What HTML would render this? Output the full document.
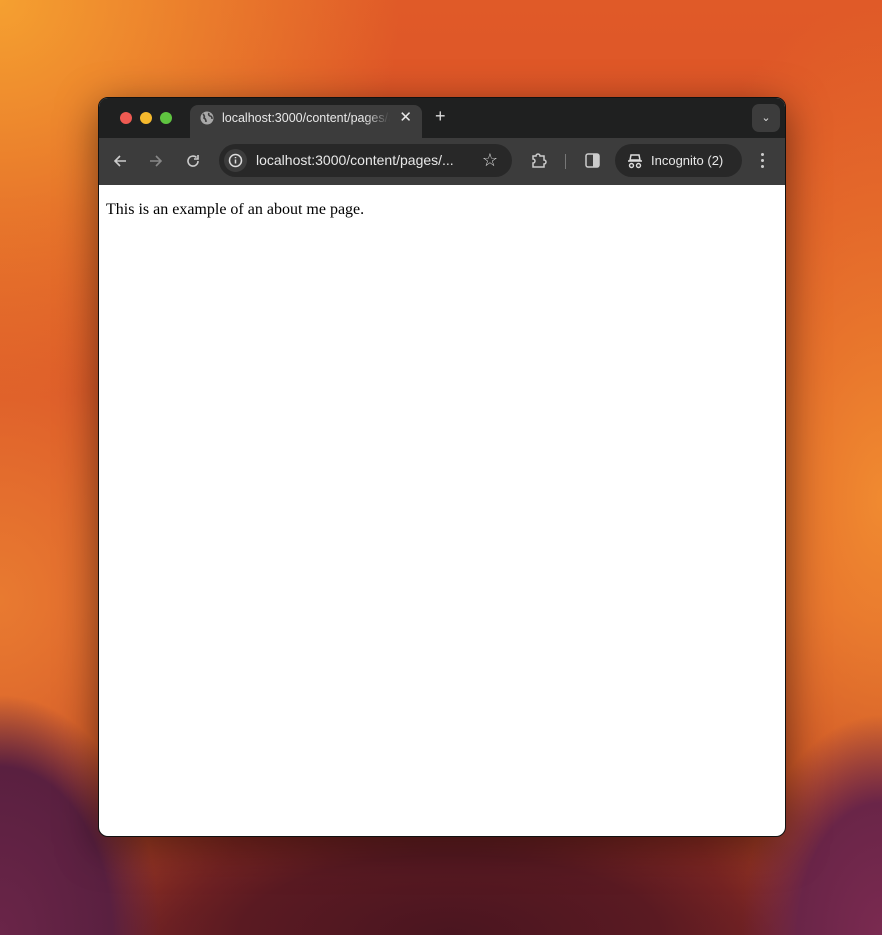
<!DOCTYPE html>
<html><head><style>
*{margin:0;padding:0;box-sizing:border-box}
body{width:882px;height:935px;overflow:hidden;position:relative;font-family:"Liberation Sans",sans-serif;
background:
radial-gradient(ellipse 160px 240px at 0px 935px,#6a2548 0%,#5a2040 70%,rgba(90,30,60,0) 100%),
radial-gradient(ellipse 140px 220px at 882px 935px,#7a2a50 0%,#6a2548 60%,rgba(120,40,80,0) 100%),
radial-gradient(ellipse 420px 160px at 450px 935px,#4a1520 0%,#5a1a22 50%,rgba(70,20,30,0) 100%),
radial-gradient(ellipse 400px 400px at 0px 0px,#f5a030 0%,rgba(240,140,40,0) 100%),
radial-gradient(ellipse 250px 500px at 882px 500px,#f08a30 0%,rgba(240,130,40,0) 100%),
radial-gradient(ellipse 300px 400px at 0px 600px,#e87a30 0%,rgba(232,122,48,0) 100%),
linear-gradient(180deg,#e05a28 0%,#d84a25 40%,#d8502a 65%,#b83a22 85%,#8a2a25 100%);}
.win{position:absolute;left:98px;top:97px;width:688px;height:740px;border-radius:10px;overflow:hidden;background:#fff;box-shadow:0 10px 40px rgba(0,0,0,.5);border:1px solid #111}
.title{height:40px;background:#1f2020;position:relative}
.dot{position:absolute;top:14px;width:12px;height:12px;border-radius:50%}
.tab{position:absolute;left:91px;top:7px;width:232px;height:33px;background:#3c3c3c;border-radius:8px 8px 0 0;color:#e8e8e8;font-size:12.5px;line-height:26px;padding-left:32px}
.tool{height:47px;background:#3c3c3c;position:relative;color:#c8c8c8}
.omni{position:absolute;left:120px;top:6px;width:293px;height:33px;background:#282828;border-radius:17px;color:#e8e8e8;font-size:14px;line-height:33px;padding-left:37px}
.inc{position:absolute;left:516px;top:6px;width:127px;height:33px;background:#282828;border-radius:17px;color:#e8e8e8;font-size:13px;line-height:33px;padding-left:36px}
.ic{position:absolute;font-size:15px}
.content{padding:16px 7px;font-family:"Liberation Serif",serif;font-size:16px;color:#000}
</style></head><body>
<div class="win">
<div class="title">
<div class="dot" style="left:21px;background:#ee5a52"></div>
<div class="dot" style="left:41px;background:#f5b92d"></div>
<div class="dot" style="left:61px;background:#5fc440"></div>
<div class="tab"><svg style="position:absolute;left:10px;top:6px" width="14" height="14" viewBox="0 0 14 14"><circle cx="7" cy="7" r="6.5" fill="#a8a8a8"/><path d="M3 3 Q5 5 4 7 Q6 8 6 11 M9 2 Q8 4 10 5 Q12 5 12 8" stroke="#3c3c3c" stroke-width="1.6" fill="none"/></svg><span style="display:inline-block;width:168px;overflow:hidden;white-space:nowrap;vertical-align:top;-webkit-mask-image:linear-gradient(90deg,#000 85%,transparent)">localhost:3000/content/pages/about</span><span style="position:absolute;right:10px;top:0;font-size:15px">✕</span></div>
<div style="position:absolute;left:336px;top:8px;color:#ddd;font-size:18px">+</div>
<div style="position:absolute;left:653px;top:6px;width:28px;height:28px;background:#3c3c3c;border-radius:7px;color:#ddd;font-size:11px;text-align:center;line-height:28px">⌄</div>
</div>
<div class="tool">
<svg class="ic" style="left:14px;top:16px" width="14" height="14" viewBox="0 0 14 14"><path d="M13 7H2M7 2L2 7l5 5" stroke="#ccc" stroke-width="1.6" fill="none"/></svg>
<svg class="ic" style="left:50px;top:16px" width="14" height="14" viewBox="0 0 14 14"><path d="M1 7h11M7 2l5 5-5 5" stroke="#888" stroke-width="1.6" fill="none"/></svg>
<svg class="ic" style="left:87px;top:16px" width="14" height="14" viewBox="0 0 14 14"><path d="M12 7A5 5 0 1 1 10.5 3.5M12 1v4H8" stroke="#ccc" stroke-width="1.6" fill="none"/></svg>
<div class="omni"><div style="position:absolute;left:5px;top:5px;width:23px;height:23px;border-radius:50%;background:#3c3c3c"></div><svg style="position:absolute;left:9px;top:9px" width="15" height="15" viewBox="0 0 15 15"><circle cx="7.5" cy="7.5" r="6" stroke="#ddd" stroke-width="1.5" fill="none"/><path d="M7.5 6.5v4M7.5 4v1.3" stroke="#ddd" stroke-width="1.5"/></svg>localhost:3000/content/pages/...<span style="position:absolute;right:14px;top:0;font-size:18px;color:#ddd">☆</span></div>
<svg class="ic" style="left:431px;top:14px" width="18" height="18" viewBox="0 0 18 18"><path d="M3 4h3a2 2 0 0 1 4 0h4v4a2 2 0 0 1 0 4v3H3v-4a2 2 0 0 0 0-4z" stroke="#ccc" stroke-width="1.5" fill="none"/></svg>
<div style="position:absolute;left:466px;top:16px;width:1px;height:15px;background:#777"></div>
<svg class="ic" style="left:486px;top:15px" width="15" height="15" viewBox="0 0 15 15"><rect x="1" y="1" width="13" height="13" rx="2" stroke="#ccc" stroke-width="1.5" fill="none"/><rect x="8" y="1" width="6" height="13" fill="#ccc"/></svg>
<div class="inc"><svg style="position:absolute;left:12px;top:9px" width="16" height="16" viewBox="0 0 16 16"><path d="M4 2h8l1 5H3z M1 8h14" stroke="#ddd" stroke-width="1.5" fill="none"/><circle cx="4.5" cy="12.5" r="2" stroke="#ddd" stroke-width="1.4" fill="none"/><circle cx="11.5" cy="12.5" r="2" stroke="#ddd" stroke-width="1.4" fill="none"/></svg>Incognito (2)</div>
<div style="position:absolute;left:662px;top:15px;width:3px;line-height:0">
<div style="width:3px;height:3px;border-radius:50%;background:#ccc;margin-bottom:3px"></div><div style="width:3px;height:3px;border-radius:50%;background:#ccc;margin-bottom:3px"></div><div style="width:3px;height:3px;border-radius:50%;background:#ccc"></div></div>
</div>
<div class="content">This is an example of an about me page.</div>
</div>
</body></html>
